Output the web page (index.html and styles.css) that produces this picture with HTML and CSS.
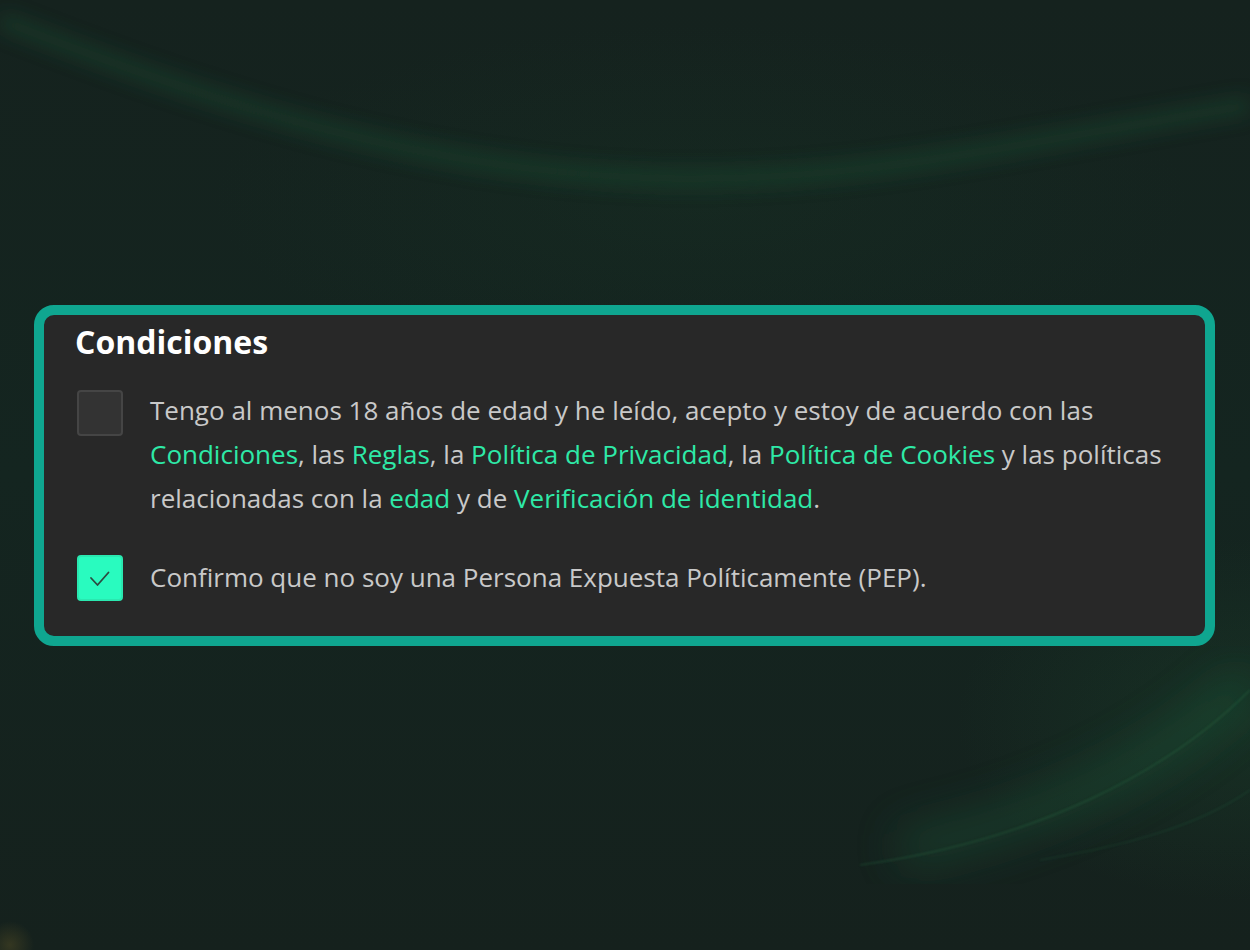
FILE: index.html
```html
<!DOCTYPE html>
<html lang="es">
<head>
<meta charset="utf-8">
<title>Condiciones</title>
<link rel="stylesheet" href="styles.css">
</head>
<body>
<div class="bg">
  <svg class="glow" width="1250" height="950" viewBox="0 0 1250 950" aria-hidden="true">
    <defs>
      <filter id="blur1" x="-20%" y="-50%" width="140%" height="200%"><feGaussianBlur stdDeviation="10"/></filter>
      <filter id="blur2" x="-20%" y="-20%" width="140%" height="140%"><feGaussianBlur stdDeviation="22"/></filter>
      <filter id="blur3"><feGaussianBlur stdDeviation="0.8"/></filter>
    </defs>
    <path d="M0 20 C 180 90, 400 170, 650 178 C 850 184, 980 150, 1250 105" stroke="#1e5234" stroke-width="14" fill="none" opacity="0.5" filter="url(#blur1)"/>
    <path d="M1250 680 C 1170 760, 1050 820, 900 850" stroke="#1c5a3a" stroke-width="36" fill="none" opacity="0.45" filter="url(#blur2)"/>
    <path d="M1250 690 C 1170 770, 1040 840, 860 865" stroke="#266642" stroke-width="1.2" fill="none" opacity="0.55" filter="url(#blur3)"/>
    <path d="M1250 790 C 1200 825, 1130 845, 1040 860" stroke="#22573a" stroke-width="1.2" fill="none" opacity="0.45" filter="url(#blur3)"/>
  </svg>
</div>
<main class="page">
  <section class="card">
    <h2 class="title">Condiciones</h2>
    <div class="row">
      <span class="box"></span>
      <p class="text">Tengo al menos 18 años de edad y he leído, acepto y estoy de acuerdo con las <a class="link">Condiciones</a>, las <a class="link">Reglas</a>, la <a class="link">Política de Privacidad</a>, la <a class="link">Política de Cookies</a> y las políticas relacionadas con la <a class="link">edad</a> y de <a class="link">Verificación de identidad</a>.</p>
    </div>
    <div class="row row-second">
      <span class="box box-checked">
        <svg width="24" height="24" viewBox="0 0 24 24" aria-hidden="true"><path d="M3 12 L9.5 19 L20.5 6.5" fill="none" stroke="#2d4a40" stroke-width="1.8" stroke-linecap="round" stroke-linejoin="round"/></svg>
      </span>
      <p class="text">Confirmo que no soy una Persona Expuesta Políticamente (PEP).</p>
    </div>
  </section>
</main>
</body>
</html>
```
FILE: styles.css
```css
html, body {
  margin: 0;
  padding: 0;
}
body {
  width: 1250px;
  height: 950px;
  overflow: hidden;
  position: relative;
  background: linear-gradient(180deg, #15221e 0%, #142520 50%, #15211d 100%);
  font-family: "Open Sans", "Noto Sans", sans-serif;
}
.bg {
  position: absolute;
  inset: 0;
  background:
    radial-gradient(circle 30px at 10px 945px, rgba(110, 95, 40, 0.35), transparent 80%),
    radial-gradient(ellipse 420px 260px at 1250px 720px, rgba(30, 80, 50, 0.3), transparent 70%),
    radial-gradient(ellipse 700px 250px at 700px 200px, rgba(25, 60, 40, 0.2), transparent 70%);
}
.glow {
  position: absolute;
  left: 0;
  top: 0;
}
.page {
  position: relative;
  padding: 305px 35px 0 34px;
}
.card {
  box-sizing: border-box;
  width: 1181px;
  height: 341px;
  border: 10px solid #0fa690;
  border-radius: 20px;
  background: #282828;
  padding: 5px 20px 0 31px;
}
.title {
  margin: 0;
  color: #ffffff;
  font-family: "Open Sans", sans-serif;
  font-weight: 700;
  font-size: 32px;
  line-height: 44px;
  letter-spacing: 0;
}
.row {
  display: flex;
  align-items: flex-start;
  gap: 27px;
  margin-top: 24px;
  padding-left: 2px;
}
.row-second {
  margin-top: 35px;
}
.box {
  flex: 0 0 auto;
  box-sizing: border-box;
  width: 46px;
  height: 46px;
  margin-top: 2px;
  border: 2px solid #454545;
  border-radius: 4px;
  background: #333333;
  display: flex;
  align-items: center;
  justify-content: center;
}
.row-second .box {
  margin-top: 0;
}
.box-checked {
  background: #29fbbf;
  border-color: #2ae8b0;
}
.text {
  margin: 0;
  color: #c9c9c9;
  font-size: 26px;
  line-height: 44px;
}
.link {
  color: #2ee9a7;
  text-decoration: none;
}
```
